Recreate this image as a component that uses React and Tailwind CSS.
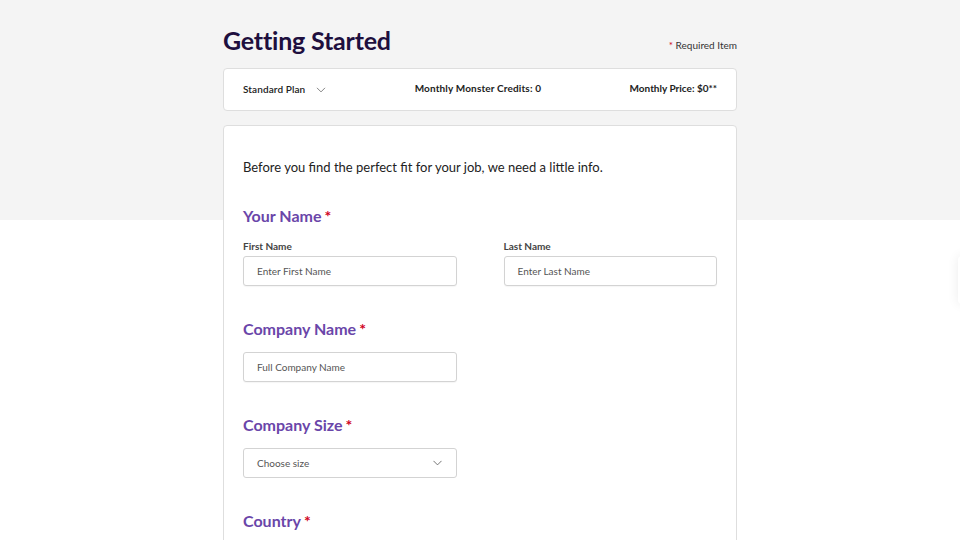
import React from "react";

const Chevron = ({ className }) => (
  <svg viewBox="0 0 12 8" className={className} fill="none" stroke="currentColor" strokeWidth="1.2" strokeLinecap="round" strokeLinejoin="round">
    <path d="M1 1.5 L6 6.5 L11 1.5" />
  </svg>
);

const Heading = ({ children, className = "" }) => (
  <h2 className={`text-[16px] leading-[20px] font-bold text-[#6a46a9] ${className}`}>
    {children}
    <span className="text-[#d0021b] ml-[3px]">*</span>
  </h2>
);

const Input = ({ placeholder }) => (
  <div className="h-[30px] w-full border border-[#d3d3d3] rounded-[3px] bg-white flex items-center px-[13px] text-[10px] text-[#555] shadow-[0_1px_1px_rgba(0,0,0,0.04)]">
    {placeholder}
  </div>
);

export default function App() {
  return (
    <div
      className="min-h-[540px] w-full bg-[linear-gradient(to_bottom,#f4f4f4_220px,#ffffff_220px)] overflow-hidden"
      style={{ fontFamily: "Lato, 'Open Sans', sans-serif" }}
    >
      <div className="w-[514px] mx-auto pt-[24px]">
        <div className="flex justify-between items-start">
          <h1 className="text-[25px] leading-[32px] font-bold text-[#1e0f3e] tracking-[-0.2px]">Getting Started</h1>
          <div className="mt-[14px] text-[10px] leading-[14px] text-[#333]">
            <span className="text-[#d0021b]">*</span> Required Item
          </div>
        </div>

        <div className="mt-[12px] h-[43px] bg-white border border-[#dedede] rounded-[4px] flex items-center justify-between px-[19px] text-[10px] font-bold text-[#222]">
          <div className="flex items-center gap-[11px] font-semibold tracking-[0.1px]">
            <span>Standard Plan</span>
            <Chevron className="w-[10px] h-[6px] text-[#777]" />
          </div>
          <div className="-mt-[2px] tracking-[0.15px]">Monthly Monster Credits: 0</div>
          <div className="-mt-[2px]">Monthly Price: $0**</div>
        </div>

        <div className="mt-[14px] bg-white border border-[#dedede] rounded-[4px] px-[19px] pt-[32px] pb-[40px] min-h-[430px]">
          <p className="text-[13px] leading-[18px] text-[#222]">
            Before you find the perfect fit for your job, we need a little info.
          </p>

          <Heading className="mt-[30px]">Your Name</Heading>
          <div className="mt-[13px] grid grid-cols-2 gap-x-[47px]">
            <div>
              <div className="text-[10px] leading-[14px] font-bold text-[#444]">First Name</div>
              <div className="mt-[3px]"><Input placeholder="Enter First Name" /></div>
            </div>
            <div>
              <div className="text-[10px] leading-[14px] font-bold text-[#444]">Last Name</div>
              <div className="mt-[3px]"><Input placeholder="Enter Last Name" /></div>
            </div>
          </div>

          <Heading className="mt-[33px]">Company Name</Heading>
          <div className="mt-[13px] w-[214px]">
            <Input placeholder="Full Company Name" />
          </div>

          <Heading className="mt-[33px]">Company Size</Heading>
          <div className="mt-[13px] w-[214px] h-[30px] border border-[#d3d3d3] rounded-[3px] bg-white flex items-center justify-between pl-[13px] pr-[14px] text-[10px] text-[#555]">
            <span>Choose size</span>
            <Chevron className="w-[9px] h-[6px] text-[#666]" />
          </div>

          <Heading className="mt-[33px]">Country</Heading>
        </div>
      </div>
      <div className="fixed right-[-44px] top-[256px] w-[46px] h-[48px] bg-white rounded-[4px] shadow-[0_0_12px_rgba(0,0,0,0.08)]" />
    </div>
  );
}
